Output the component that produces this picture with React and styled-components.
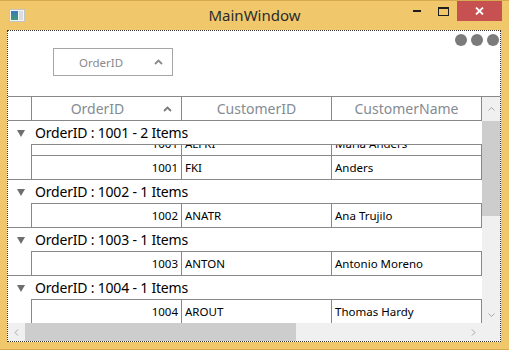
import React from 'react';
import styled, { createGlobalStyle } from 'styled-components';

const GlobalStyle = createGlobalStyle`
  html, body {
    margin: 0;
    padding: 0;
    background: #f0c86b;
  }
  body {
    font-family: "Noto Sans", "Open Sans", sans-serif;
  }
`;

const LINE = '#888888';

const groups = [
  { id: 1001, rows: [
    { id: 1001, cust: 'ALFKI', name: 'Maria Anders', clipped: true },
    { id: 1001, cust: 'FKI', name: 'Anders' },
  ] },
  { id: 1002, rows: [{ id: 1002, cust: 'ANATR', name: 'Ana Trujilo' }] },
  { id: 1003, rows: [{ id: 1003, cust: 'ANTON', name: 'Antonio Moreno' }] },
  { id: 1004, rows: [{ id: 1004, cust: 'AROUT', name: 'Thomas Hardy' }] },
];

const Window = styled.div`
  width: 509px;
  height: 350px;
  box-sizing: border-box;
  background: #f0c86b;
  border-top: 1px solid #d6aa4e;
  border-bottom: 1px solid #d6aa4e;
  display: flex;
  flex-direction: column;
`;

const TitleBar = styled.div`
  height: 29px;
  display: grid;
  grid-template-columns: 1fr auto 1fr;
  align-items: start;
`;

const AppIcon = styled.svg`
  margin: 8px 0 0 9px;
  display: block;
`;

const Title = styled.div`
  line-height: 28px;
  font-size: 15px;
  color: #2b2b2b;
`;

const Controls = styled.div`
  justify-self: end;
  display: flex;
  margin-right: 7px;
`;

const CtrlButton = styled.div`
  width: ${p => p.$w}px;
  height: 20px;
  display: flex;
  align-items: center;
  justify-content: center;
  background: ${p => (p.$close ? '#c75050' : 'transparent')};
`;

const Client = styled.div`
  margin: 0 8px 0 7px;
  height: 312px;
  box-sizing: border-box;
  border: 1px dotted #333;
  background: #fff;
  display: flex;
  flex-direction: column;
`;

const DropArea = styled.div`
  height: 65px;
  flex: none;
  display: flex;
  justify-content: space-between;
  align-items: flex-start;
  padding: 3px 1px 0 45px;
  box-sizing: border-box;
`;

const GroupChip = styled.div`
  margin-top: 14px;
  width: 120px;
  height: 28px;
  box-sizing: border-box;
  border: 1px solid #a6a6a6;
  display: flex;
  align-items: center;
  justify-content: space-between;
  padding: 0 9px 0 25px;
  font-size: 11.5px;
  color: #8a8a8a;
`;

const Dots = styled.div`
  display: flex;
  gap: 4px;
`;

const Dot = styled.span`
  width: 12px;
  height: 12px;
  border-radius: 50%;
  background: #7b7b7b;
`;

const GridArea = styled.div`
  flex: 1;
  min-height: 0;
  display: grid;
  grid-template-columns: 474px 18px;
  grid-template-rows: 1fr 18px;
  border-top: 1px solid ${LINE};
`;

const Viewport = styled.div`
  overflow: hidden;
  min-width: 0;
`;

const HeaderRow = styled.div`
  display: flex;
  height: 24px;
  box-sizing: border-box;
  border-bottom: 1px solid ${LINE};
`;

const Indent = styled.div`
  width: 23px;
  flex: none;
`;

const HeaderCell = styled.div`
  width: ${p => (p.$last ? 151 : 150)}px;
  flex: none;
  box-sizing: border-box;
  border-left: 1px solid ${LINE};
  border-right: ${p => (p.$last ? `1px solid ${LINE}` : 'none')};
  display: flex;
  align-items: center;
  padding-right: ${p => (p.$sorted ? 9 : 0)}px;
  font-size: 14px;
  color: #838b93;
`;

const HeaderText = styled.span`
  flex: 1;
  text-align: center;
`;

const Group = styled.div`
  border-bottom: 1px solid ${LINE};
`;

const GroupHeader = styled.div`
  height: 23px;
  display: flex;
  align-items: center;
  font-size: 14px;
  letter-spacing: -0.2px;
  color: #000;
`;

const Expander = styled.svg`
  margin: 1px 10px 0 9px;
  display: block;
`;

const DataRow = styled.div`
  display: flex;
  height: 24px;
  margin-top: ${p => p.$offset || 0}px;
`;

const ClipRow = styled.div`
  margin-left: 23px;
  height: 10px;
  overflow: hidden;
  border-top: 1px solid ${LINE};
  & > ${DataRow} {
    margin-left: -23px;
  }
`;

const Cell = styled.div`
  width: ${p => (p.$last ? 151 : 150)}px;
  flex: none;
  box-sizing: border-box;
  border-top: 1px solid ${LINE};
  border-left: 1px solid ${LINE};
  border-right: ${p => (p.$last ? `1px solid ${LINE}` : 'none')};
  padding: 0 3px;
  line-height: 23px;
  font-size: 11.5px;
  color: #000;
  text-align: ${p => (p.$right ? 'right' : 'left')};
  white-space: nowrap;
`;

const VScroll = styled.div`
  background: #f0f0f0;
  display: flex;
  flex-direction: column;
`;

const HScroll = styled.div`
  background: #f0f0f0;
  display: flex;
`;

const ArrowBox = styled.div`
  flex: none;
  width: ${p => p.$w || 17}px;
  height: ${p => p.$h || 18}px;
  display: flex;
  align-items: center;
  justify-content: center;
`;

const Thumb = styled.div`
  flex: none;
  background: #cdcdcd;
  width: ${p => p.$w || 18}px;
  height: ${p => p.$h || 18}px;
`;

const Track = styled.div`
  flex: 1;
`;

const Corner = styled.div`
  background: #f0f0f0;
`;

const Chevron = ({ dir }) => {
  const pts = {
    up: '0.5,4.5 3.5,1.5 6.5,4.5',
    down: '0.5,1.5 3.5,4.5 6.5,1.5',
    left: '4,0.5 1,3.5 4,6.5',
    right: '1,0.5 4,3.5 1,6.5',
  }[dir];
  const vertical = dir === 'up' || dir === 'down';
  return (
    <svg width={vertical ? 7 : 5} height={vertical ? 6 : 7}>
      <polyline points={pts} fill="none" stroke="#a6a6a6" strokeWidth="1" />
    </svg>
  );
};

const SortArrow = ({ color = '#8a8a8a' }) => (
  <svg width="9" height="6" style={{ display: 'block' }}>
    <polyline points="1,5 4.5,1.5 8,5" fill="none" stroke={color} strokeWidth="1.8" />
  </svg>
);

const Row = ({ r, offset }) => (
  <DataRow $offset={offset}>
    <Indent />
    <Cell $right>{r.id}</Cell>
    <Cell>{r.cust}</Cell>
    <Cell $last>{r.name}</Cell>
  </DataRow>
);

export default function App() {
  return (
    <Window>
      <GlobalStyle />
      <TitleBar>
        <AppIcon width="16" height="13">
          <defs>
            <linearGradient id="ico" x1="0" y1="0" x2="0" y2="1">
              <stop offset="0" stopColor="#3b78b8" />
              <stop offset="1" stopColor="#3f9a74" />
            </linearGradient>
          </defs>
          <rect x="0.5" y="0.5" width="15" height="12" fill="#f4f4f4" stroke="#c4c4c4" />
          <rect x="2" y="2" width="7" height="9" fill="url(#ico)" />
          <rect x="10" y="2" width="4" height="9" fill="#d8dde2" />
        </AppIcon>
        <Title>MainWindow</Title>
        <Controls>
          <CtrlButton $w={26}>
            <svg width="8" height="2"><rect width="8" height="2" fill="#1e1e1e" /></svg>
          </CtrlButton>
          <CtrlButton $w={27}>
            <svg width="11" height="9">
              <rect x="0.5" y="0.5" width="10" height="8" fill="none" stroke="#1e1e1e" />
              <rect x="0" y="0" width="11" height="2" fill="#1e1e1e" />
            </svg>
          </CtrlButton>
          <CtrlButton $w={45} $close>
            <svg width="9" height="8">
              <path d="M1 0.5 L8 7.5 M8 0.5 L1 7.5" stroke="#fff" strokeWidth="1.8" />
            </svg>
          </CtrlButton>
        </Controls>
      </TitleBar>

      <Client>
        <DropArea>
          <GroupChip>
            <span>OrderID</span>
            <SortArrow />
          </GroupChip>
          <Dots>
            <Dot />
            <Dot />
            <Dot />
          </Dots>
        </DropArea>

        <GridArea>
          <Viewport>
            <HeaderRow>
              <Indent />
              <HeaderCell $sorted>
                <HeaderText>OrderID</HeaderText>
                <SortArrow color="#7a7a7a" />
              </HeaderCell>
              <HeaderCell>
                <HeaderText>CustomerID</HeaderText>
              </HeaderCell>
              <HeaderCell $last>
                <HeaderText>CustomerName</HeaderText>
              </HeaderCell>
            </HeaderRow>

            {groups.map(g => (
              <Group key={g.id}>
                <GroupHeader>
                  <Expander width="8" height="7">
                    <polygon points="0,0 8,0 4,7" fill="#6e6e6e" />
                  </Expander>
                  OrderID : {g.id} - {g.rows.length} Items
                </GroupHeader>
                {g.rows.map((r, i) =>
                  r.clipped ? (
                    <ClipRow key={i}>
                      <Row r={r} offset={-14} />
                    </ClipRow>
                  ) : (
                    <Row key={i} r={r} />
                  )
                )}
              </Group>
            ))}
          </Viewport>

          <VScroll>
            <ArrowBox $w={18} $h={24}><Chevron dir="up" /></ArrowBox>
            <Thumb $h={95} />
            <Track />
            <ArrowBox $w={18} $h={17}><Chevron dir="down" /></ArrowBox>
          </VScroll>

          <HScroll>
            <ArrowBox $w={17}><Chevron dir="left" /></ArrowBox>
            <Thumb $w={271} />
            <Track />
            <ArrowBox $w={17}><Chevron dir="right" /></ArrowBox>
          </HScroll>
          <Corner />
        </GridArea>
      </Client>
    </Window>
  );
}
